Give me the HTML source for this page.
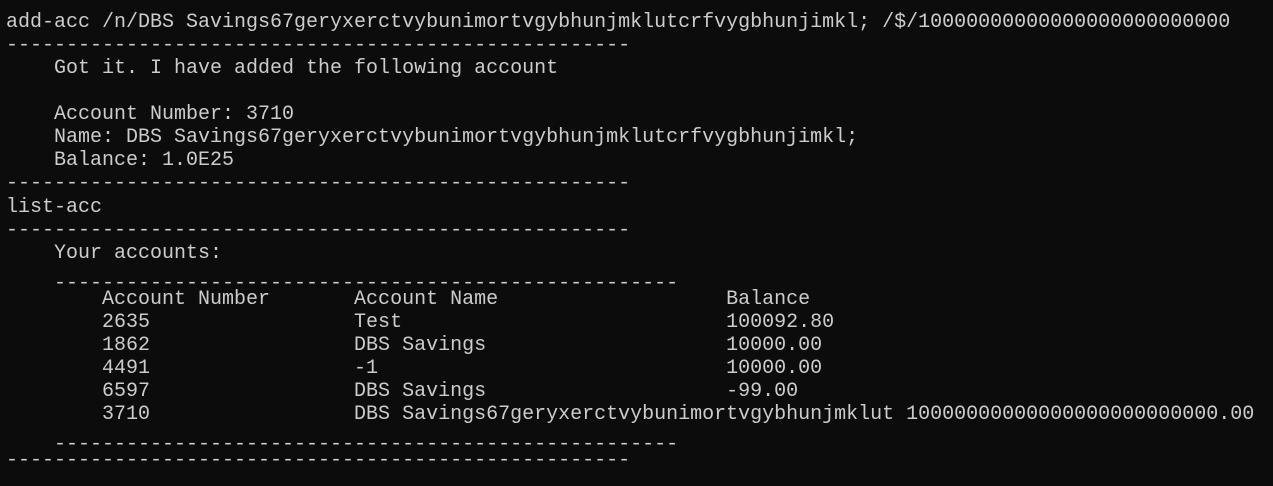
<!DOCTYPE html>
<html><head><meta charset="utf-8"><style>
html,body{margin:0;padding:0;background:#0c0c0c;width:1273px;height:486px;overflow:hidden}
pre{margin:0;position:absolute;left:6px;top:11px;font-family:"Liberation Mono",monospace;font-size:20px;line-height:23.06px;color:#cccccc}
.d{position:relative;top:7px}
</style></head><body><pre>add-acc /n/DBS Savings67geryxerctvybunimortvgybhunjmklutcrfvygbhunjimkl; /$/10000000000000000000000000
----------------------------------------------------
    Got it. I have added the following account

    Account Number: 3710
    Name: DBS Savings67geryxerctvybunimortvgybhunjmklutcrfvygbhunjimkl;
    Balance: 1.0E25
----------------------------------------------------
list-acc
----------------------------------------------------
    Your accounts:
<span class="d">    ----------------------------------------------------</span>
        Account Number       Account Name                   Balance
        2635                 Test                           100092.80
        1862                 DBS Savings                    10000.00
        4491                 -1                             10000.00
        6597                 DBS Savings                    -99.00
        3710                 DBS Savings67geryxerctvybunimortvgybhunjmklut 10000000000000000000000000.00
<span class="d">    ----------------------------------------------------</span>
----------------------------------------------------</pre></body></html>
